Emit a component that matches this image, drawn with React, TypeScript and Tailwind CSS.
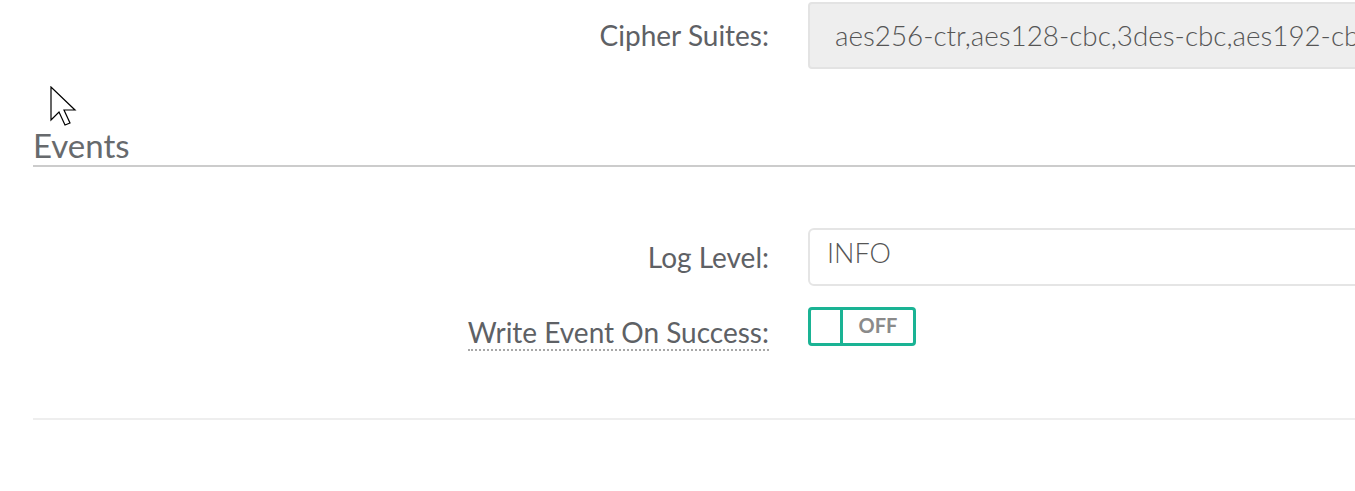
import React from "react";

function Cursor() {
  return (
    <svg
      className="absolute left-[50px] top-[86px]"
      width="30"
      height="40"
      viewBox="0 0 15 20"
    >
      <path
        d="M0.5 0.5 L0.5 17 L4.5 13 L7.5 19.5 L10 18.5 L7 12 L12.5 12 Z"
        fill="#ffffff"
        stroke="#000000"
        strokeWidth="0.6"
        strokeLinejoin="miter"
      />
    </svg>
  );
}

function Label({ text }: { text: string }) {
  return (
    <div className="w-[736px] shrink-0 text-right">
      <span className="text-[28px] text-[#5e6165] leading-[32px]">{text}</span>
    </div>
  );
}

export default function App() {
  return (
    <div
      className="relative w-[1355px] h-[491px] overflow-hidden bg-white"
      style={{ fontFamily: "Lato, 'Open Sans', sans-serif" }}
    >
      <Cursor />
      <div className="pl-[33px] pt-[2px]">
        {/* Cipher suites */}
        <div className="flex items-center gap-[39px]">
          <Label text="Cipher Suites:" />
          <div className="w-[700px] h-[67px] shrink-0 flex items-center pl-[25px] bg-[#eeeeee] border-2 border-[#e3e3e3] rounded-[4px] text-[27.8px] font-light text-[#555555] whitespace-nowrap overflow-hidden">
            aes256-ctr,aes128-cbc,3des-cbc,aes192-cbc,aes256-cbc
          </div>
        </div>

        {/* Events header */}
        <div className="mt-[57px] w-[1400px] border-b-2 border-[#cccccc] h-[41px] flex items-end">
          <span className="text-[33px] leading-[40px] text-[#676a6d]">
            Events
          </span>
        </div>

        {/* Log level */}
        <div className="mt-[61px] flex items-center gap-[39px]">
          <Label text="Log Level:" />
          <div className="w-[700px] h-[58px] shrink-0 flex items-center pl-[17px] pb-[8px] bg-white border-2 border-[#e5e5e5] rounded-[6px] text-[27px] font-light text-[#555555]">
            INFO
          </div>
        </div>

        {/* Write event on success */}
        <div className="mt-[18px] flex items-center gap-[39px]">
          <div className="w-[736px] shrink-0 text-right pt-[15px]">
            <span className="text-[28px] text-[#5e6165] leading-[27px] border-b-2 border-dotted border-[#a8a8a8]">
              Write Event On Success:
            </span>
          </div>
          <div className="w-[108px] h-[39px] shrink-0 flex border-[3px] border-[#1ab394] rounded-[4px] bg-white">
            <div className="w-[32px] h-full border-r-[3px] border-[#1ab394]" />
            <div className="flex-1 flex items-center justify-center pb-[3px] text-[20px] font-bold text-[#8a8a8a]">
              OFF
            </div>
          </div>
        </div>

        {/* bottom divider */}
        <div className="mt-[69px] w-[1400px] border-b-2 border-[#eeeeee]" />
      </div>
    </div>
  );
}
